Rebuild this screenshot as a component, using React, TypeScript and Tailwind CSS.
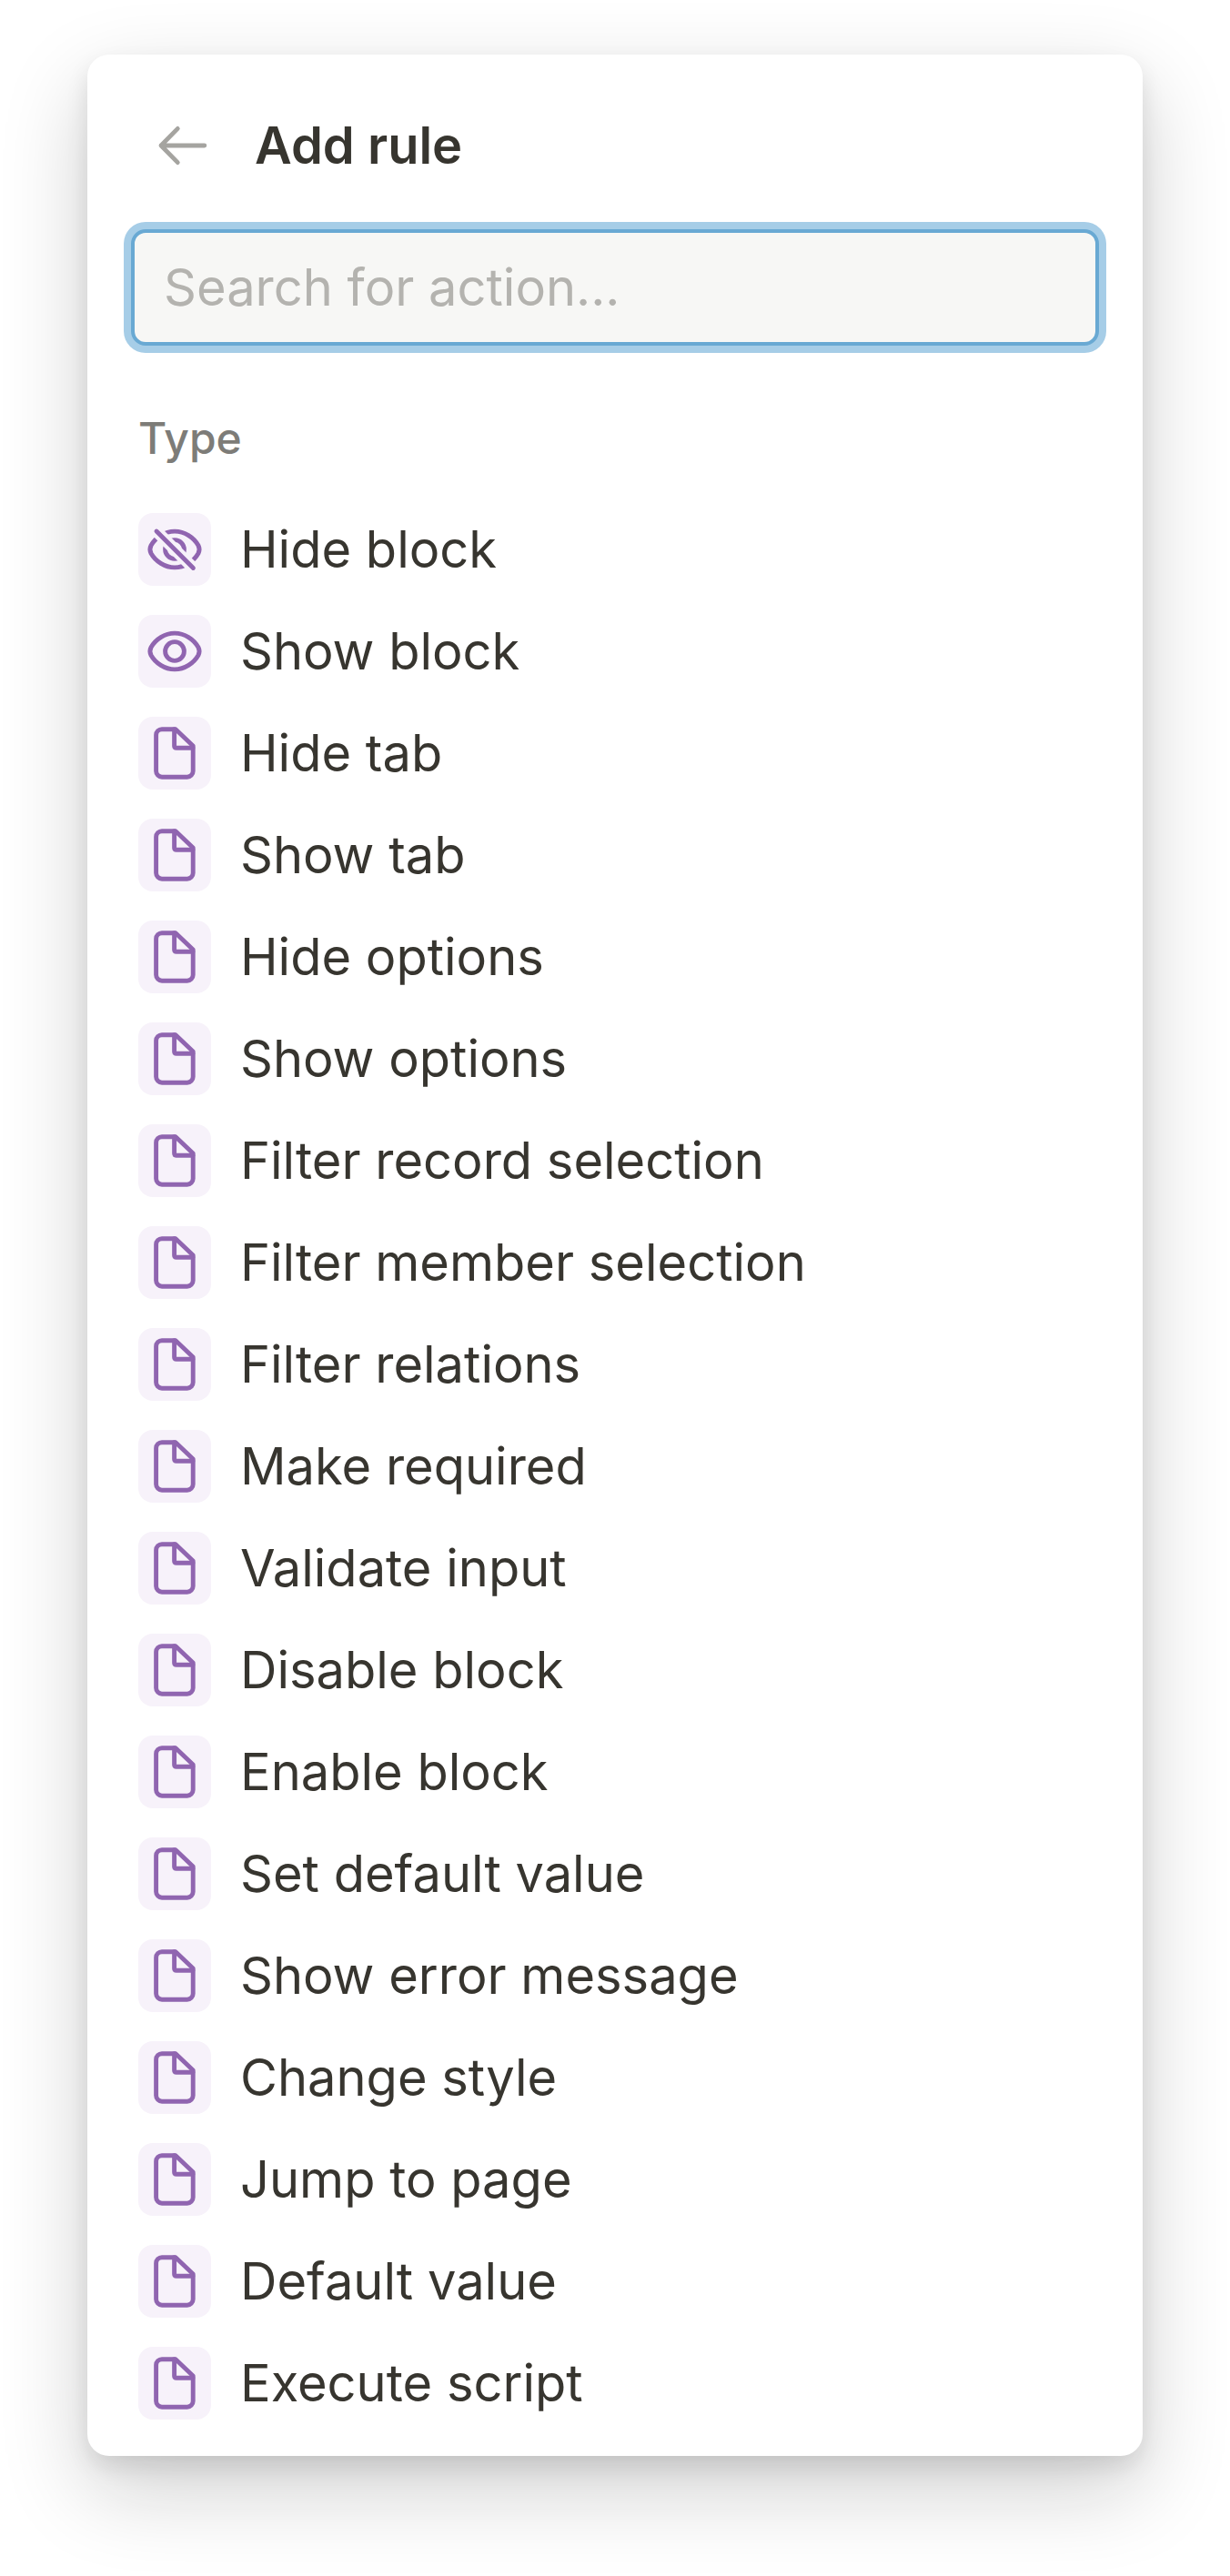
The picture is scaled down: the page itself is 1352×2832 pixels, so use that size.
import React from "react";

type IconName = "eye" | "eyeOff" | "page";

interface RuleAction {
  label: string;
  icon: IconName;
}

const actions: RuleAction[] = [
  { label: "Hide block", icon: "eyeOff" },
  { label: "Show block", icon: "eye" },
  { label: "Hide tab", icon: "page" },
  { label: "Show tab", icon: "page" },
  { label: "Hide options", icon: "page" },
  { label: "Show options", icon: "page" },
  { label: "Filter record selection", icon: "page" },
  { label: "Filter member selection", icon: "page" },
  { label: "Filter relations", icon: "page" },
  { label: "Make required", icon: "page" },
  { label: "Validate input", icon: "page" },
  { label: "Disable block", icon: "page" },
  { label: "Enable block", icon: "page" },
  { label: "Set default value", icon: "page" },
  { label: "Show error message", icon: "page" },
  { label: "Change style", icon: "page" },
  { label: "Jump to page", icon: "page" },
  { label: "Default value", icon: "page" },
  { label: "Execute script", icon: "page" },
];

const ActionIcon: React.FC<{ name: IconName }> = ({ name }) => (
  <svg
    viewBox="0 0 80 80"
    className="size-20 shrink-0 rounded-2xl bg-[#f7f2fa] text-[#9065b0]"
    fill="none"
    stroke="currentColor"
    strokeWidth="4.9"
    strokeLinecap="round"
    strokeLinejoin="round"
    aria-hidden="true"
  >
    {name === "page" && (
      <>
        <path d="M41 13.7H26A6.4 6.4 0 0 0 19.6 20V59.8A6.4 6.4 0 0 0 26 66.2H53.8A6.4 6.4 0 0 0 60.2 59.8V32Z" />
        <path d="M39.6 13.7V32Q39.6 34.3 41.9 34.3H60" />
      </>
    )}
    {name !== "page" && (
      <>
        <path d="M40 20.1C51 20.1 61 27 65.9 35.5Q68.3 40 65.9 44.5C61 53 51 59.9 40 59.9S19 53 14.100 44.5Q11.700 40 14.100 35.5C19 27 29 20.1 40 20.1Z" />
        <circle cx="40" cy="40" r="10.4" />
      </>
    )}
    {name === "eyeOff" && (
      <>
        {/* Tile-coloured gap on both sides of the slash */}
        <path
          d="M16 16L66 66"
          stroke="#f7f2fa"
          strokeWidth="13"
          strokeLinecap="butt"
        />
        <path d="M20 20L60.4 60.4" />
      </>
    )}
  </svg>
);

const Header: React.FC = () => (
  <header className="flex items-center px-6">
    <button
      type="button"
      aria-label="Back"
      className="flex size-16 items-center justify-center text-[#a5a4a0]"
    >
      <svg
        viewBox="0 0 64 64"
        className="size-16"
        fill="none"
        stroke="currentColor"
        strokeWidth="4.8"
        strokeLinecap="round"
        strokeLinejoin="round"
        aria-hidden="true"
      >
        <path d="M56.8 32H9M27.3 13.4L9 32L27.3 50.6" />
      </svg>
    </button>
    <h1 className="ml-12 text-[56px] leading-[80px] font-semibold">
      Add rule
    </h1>
  </header>
);

export default function App() {
  return (
    <main className="min-h-screen bg-white px-24 py-15 font-['Inter',sans-serif] text-[#37352f]">
      <section className="rounded-3xl bg-white px-12 pt-15 pb-6 shadow-[0_36px_96px_rgba(15,15,15,0.2),0_12px_24px_rgba(15,15,15,0.1)]">
        <Header />
        <input
          type="text"
          aria-label="Search for action"
          placeholder="Search for action..."
          className="mt-13 block h-32 w-full rounded-2xl border-4 border-[#69a9d3] bg-[#f7f7f5] px-8 text-[56px] outline-none ring-8 ring-[#a6cde7] placeholder:text-[#b4b3af]"
        />
        <h2 className="mt-16 px-2 text-[48px] leading-[76px] font-medium text-[#7d7c78]">
          Type
        </h2>
        <ul className="mt-7">
          {actions.map((action) => (
            <li key={action.label}>
              <button
                type="button"
                className="flex w-full items-center gap-8 px-2 py-4 text-left text-[56px] leading-[80px]"
              >
                <ActionIcon name={action.icon} />
                {action.label}
              </button>
            </li>
          ))}
        </ul>
      </section>
    </main>
  );
}
